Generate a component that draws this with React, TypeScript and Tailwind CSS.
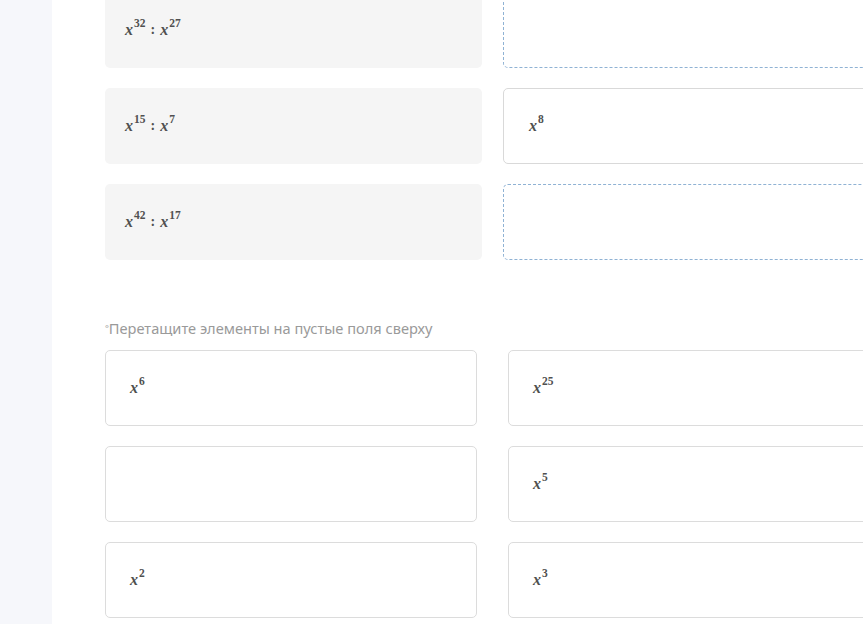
import { Fragment } from "react";
import type { ReactNode } from "react";

const mathFont = { fontFamily: '"Liberation Serif", "DejaVu Serif", serif' };

function Pow({ base = "x", exp }: { base?: string; exp: string }) {
  return (
    <span className="inline-flex items-start font-bold">
      <span className="italic text-[16px] leading-none">{base}</span>
      <span className="text-[11.5px] leading-none -mt-[4px] ml-[1px]">{exp}</span>
    </span>
  );
}

function Expr({ a, b }: { a: string; b: string }) {
  return (
    <span className="inline-flex items-center gap-[5px]">
      <Pow exp={a} />
      <span className="text-[14px] leading-none font-bold">:</span>
      <Pow exp={b} />
    </span>
  );
}

function Task({ a, b }: { a: string; b: string }) {
  return (
    <div className="h-[76px] rounded-[5px] bg-[#f5f5f5] pl-[20px] flex items-center text-[#505050]" style={mathFont}>
      <Expr a={a} b={b} />
    </div>
  );
}

function Slot({ children }: { children?: ReactNode }) {
  if (!children) {
    return <div className="h-[76px] rounded-[5px] border border-dashed border-[#8fb2d4]" />;
  }
  return (
    <div className="h-[76px] rounded-[5px] border border-[#d9d9d9] pl-[25px] flex items-center text-[#505050]" style={mathFont}>
      {children}
    </div>
  );
}

function Chip({ exp }: { exp?: string }) {
  return (
    <div className="h-[76px] rounded-[5px] border border-[#dcdcdc] pl-[24px] flex items-center text-[#505050]" style={mathFont}>
      {exp && <Pow exp={exp} />}
    </div>
  );
}

export default function App() {
  const tasks = [
    { a: "32", b: "27", answer: null },
    { a: "15", b: "7", answer: "8" },
    { a: "42", b: "17", answer: null },
  ];
  const chips = ["6", "25", "", "5", "2", "3"];

  return (
    <div className="w-[863px] h-[624px] overflow-hidden flex bg-white">
      <div className="w-[52px] shrink-0 bg-[#f6f7fb]" />
      <div className="flex-1 pl-[53px] -mt-[8px]">
        <div className="w-[775px] grid grid-cols-[377px_377px] gap-x-[21px] gap-y-[20px]">
          {tasks.map((t) => (
            <Fragment key={t.a}>
              <Task a={t.a} b={t.b} />
              <Slot>{t.answer && <Pow exp={t.answer} />}</Slot>
            </Fragment>
          ))}
        </div>
        <p
          className="mt-[59px] text-[14.6px] leading-[18px] text-[#9a9a9a]"
          style={{ fontFamily: '"Noto Sans", Inter, sans-serif' }}
        >
          <span className="text-[9px] align-top relative top-[1px]">°</span>Перетащите элементы на пустые поля сверху
        </p>
        <div className="mt-[13px] w-[775px] grid grid-cols-[372px_372px] gap-x-[31px] gap-y-[20px]">
          {chips.map((c, i) => (
            <Chip key={i} exp={c || undefined} />
          ))}
        </div>
      </div>
    </div>
  );
}
